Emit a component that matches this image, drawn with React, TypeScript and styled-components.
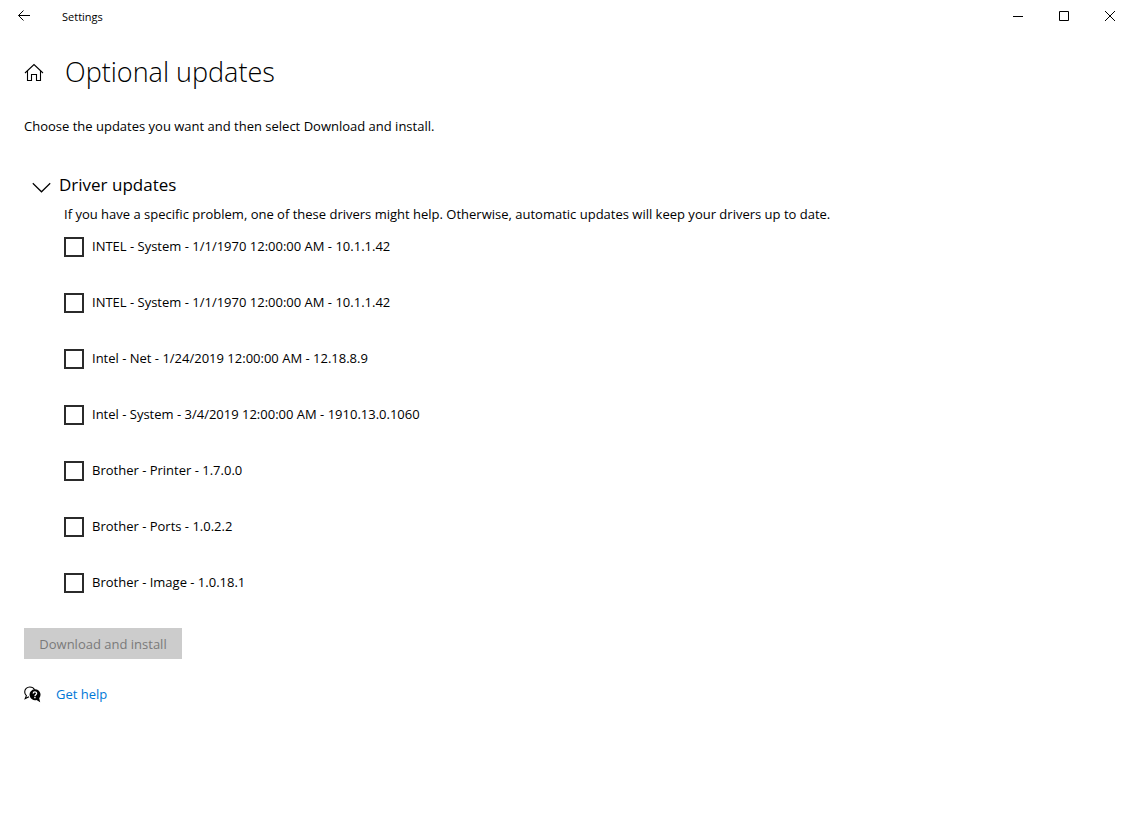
import React, { useState } from "react";
import styled, { createGlobalStyle } from "styled-components";

const GlobalStyle = createGlobalStyle`
  * { box-sizing: border-box; }
  body {
    margin: 0;
    background: #fff;
    color: #000;
    font-family: "Segoe UI", "Open Sans", "Noto Sans", sans-serif;
    font-size: 13px;
    line-height: 20px;
  }
`;

const TitleBar = styled.header`
  display: flex;
  align-items: center;
  height: 32px;
`;

const BarButton = styled.button<{ $width: number }>`
  display: flex;
  align-items: center;
  justify-content: center;
  width: ${(p) => p.$width}px;
  height: 32px;
  padding: 0;
  border: 0;
  background: transparent;
  color: #000;
`;

const AppName = styled.span`
  padding: 2px 0 0 14px;
  flex: 1;
  font-size: 11px;
  line-height: 16px;
`;

const Page = styled.main`
  padding: 20px 24px;
`;

const PageHeader = styled.div`
  display: flex;
  align-items: center;
  gap: 21px;
  height: 40px;
`;

const HomeButton = styled.button`
  display: flex;
  width: 20px;
  height: 20px;
  padding: 0;
  border: 0;
  background: transparent;
  color: #000;
`;

const PageTitle = styled.h1`
  margin: 0;
  font-size: 27px;
  line-height: 40px;
  font-weight: 300;
`;

const Intro = styled.p`
  margin: 24px 0 0;
`;

const Section = styled.section`
  margin-top: 37px;
`;

const SectionToggle = styled.button`
  display: flex;
  align-items: center;
  gap: 8px;
  padding: 0 0 0 8px;
  border: 0;
  background: transparent;
  color: #000;
  font: inherit;
  font-size: 17px;
  line-height: 24px;
`;

const SectionTitle = styled.h2`
  margin: 0;
  font: inherit;
`;

const SectionBody = styled.div`
  padding: 7px 0 0 40px;
`;

const SectionNote = styled.p`
  margin: 0;
`;

const DriverList = styled.ul`
  display: flex;
  flex-direction: column;
  gap: 36px;
  margin: 12px 0 0;
  padding: 0;
  list-style: none;
`;

const DriverLabel = styled.label`
  display: flex;
  align-items: center;
  gap: 8px;
  height: 20px;
`;

const CheckBox = styled.input`
  appearance: none;
  flex: none;
  width: 20px;
  height: 20px;
  margin: 2px 0 0;
  border: 2px solid #2b2b2b;
  background: #fff;
  &:checked {
    background: #0078d7;
    border-color: #0078d7;
  }
`;

const InstallButton = styled.button`
  display: block;
  min-width: 158px;
  height: 31px;
  margin-top: 36px;
  padding: 0 12px;
  border: 0;
  background: #0078d7;
  color: #fff;
  font: inherit;
  &:disabled {
    background: #ccc;
    color: #7a7a7a;
  }
`;

const HelpRow = styled.div`
  display: flex;
  align-items: center;
  gap: 15px;
  margin-top: 25px;
`;

const HelpLink = styled.a`
  color: #0078d7;
  text-decoration: none;
`;

const drivers = [
  "INTEL - System - 1/1/1970 12:00:00 AM - 10.1.1.42",
  "INTEL - System - 1/1/1970 12:00:00 AM - 10.1.1.42",
  "Intel - Net - 1/24/2019 12:00:00 AM - 12.18.8.9",
  "Intel - System - 3/4/2019 12:00:00 AM - 1910.13.0.1060",
  "Brother - Printer - 1.7.0.0",
  "Brother - Ports - 1.0.2.2",
  "Brother - Image - 1.0.18.1",
];

const BackIcon = () => (
  <svg width="14" height="12" viewBox="0 0 14 12" fill="none" stroke="currentColor">
    <path d="M13 5.5H1.5M6.5 0.5L1.5 5.5L6.5 10.5" />
  </svg>
);

const HomeIcon = () => (
  <svg width="20" height="20" viewBox="0 0 20 20" fill="none" stroke="currentColor" strokeWidth="1.1">
    <path d="M1 11L10 2.6L19 11" />
    <path d="M3.5 9V18.5H7.5V12.5H12.5V18.5H16.5V9" />
  </svg>
);

const ChevronIcon = () => (
  <svg width="19" height="24" viewBox="0 0 19 24" fill="none" stroke="currentColor" strokeWidth="1.2">
    <path d="M0.8 10.3L9.5 18.8L18.2 10.3" />
  </svg>
);

const HelpIcon = () => (
  <svg width="17" height="17" viewBox="0 0 17 17" fill="none">
    <path
      d="M5 10.8L1.2 12.6L2.4 9.6C1.2 8.6 0.7 7.4 0.7 6C0.7 3 3 1 5.8 1C8 1 9.8 2.1 10.6 3.7"
      stroke="#000"
      strokeWidth="1.1"
    />
    <path d="M10.8 3.2A5.5 5.5 0 1 0 12.5 14L16.2 16.2L15.2 12.2A5.5 5.5 0 0 0 10.8 3.2Z" fill="#000" />
    <path d="M9.2 7.5C9.2 5.3 12.6 5.3 12.6 7.3C12.6 8.7 10.9 8.7 10.9 10.2" stroke="#fff" strokeWidth="1.3" />
    <path d="M10.2 11H11.6V12.3H10.2Z" fill="#fff" />
  </svg>
);

const CaptionIcon = ({ d }: { d: string }) => (
  <svg width="12" height="12" viewBox="0 0 12 12" fill="none" stroke="currentColor">
    <path d={d} />
  </svg>
);

export default function App() {
  const [selected, setSelected] = useState<number[]>([]);
  const [open, setOpen] = useState(true);

  const toggle = (i: number) =>
    setSelected((s) => (s.includes(i) ? s.filter((n) => n !== i) : [...s, i]));

  return (
    <>
      <GlobalStyle />
      <TitleBar>
        <BarButton $width={48} aria-label="Back"><BackIcon /></BarButton>
        <AppName>Settings</AppName>
        <BarButton $width={46} aria-label="Minimize"><CaptionIcon d="M1 6.5H11" /></BarButton>
        <BarButton $width={46} aria-label="Maximize"><CaptionIcon d="M1.5 1.5H10.5V10.5H1.5Z" /></BarButton>
        <BarButton $width={46} aria-label="Close"><CaptionIcon d="M1 1L11 11M11 1L1 11" /></BarButton>
      </TitleBar>
      <Page>
        <PageHeader>
          <HomeButton aria-label="Home"><HomeIcon /></HomeButton>
          <PageTitle>Optional updates</PageTitle>
        </PageHeader>
        <Intro>Choose the updates you want and then select Download and install.</Intro>
        <Section>
          <SectionTitle>
            <SectionToggle aria-expanded={open} onClick={() => setOpen(!open)}>
              <ChevronIcon />
              Driver updates
            </SectionToggle>
          </SectionTitle>
          {open && (
            <SectionBody>
              <SectionNote>
                If you have a specific problem, one of these drivers might help. Otherwise, automatic updates will keep your drivers up to date.
              </SectionNote>
              <DriverList>
                {drivers.map((name, i) => (
                  <li key={i}>
                    <DriverLabel>
                      <CheckBox type="checkbox" checked={selected.includes(i)} onChange={() => toggle(i)} />
                      {name}
                    </DriverLabel>
                  </li>
                ))}
              </DriverList>
            </SectionBody>
          )}
        </Section>
        <InstallButton disabled={selected.length === 0}>Download and install</InstallButton>
        <HelpRow>
          <HelpIcon />
          <HelpLink href="#help">Get help</HelpLink>
        </HelpRow>
      </Page>
    </>
  );
}
